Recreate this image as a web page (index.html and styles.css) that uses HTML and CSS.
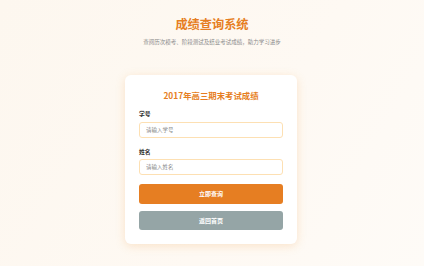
FILE: index.html
```html
<!DOCTYPE html>
<html lang="zh-CN">
<head>
    <meta charset="UTF-8">
    <meta name="viewport" content="width=device-width, initial-scale=1.0">
    <title>成绩查询系统</title>
    <link rel="stylesheet" href="styles.css">
</head>
<body>

    <div class="header">
        <h1 class="title">成绩查询系统</h1>
        <p class="subtitle">查阅历次模考、阶段测试及结业考试成绩，助力学习进步</p>
    </div>

    <div class="card">
        <h2 class="card-title">2017年高三期末考试成绩</h2>

        <label class="label" for="sid">学号</label>
        <input class="field" type="text" id="sid" placeholder="请输入学号" />

        <label class="label label-gap" for="sname">姓名</label>
        <input class="field" type="text" id="sname" placeholder="请输入姓名" />

        <button class="btn btn-main">立即查询</button>
        <button class="btn btn-back">返回首页</button>
    </div>

</body>
</html>
```

FILE: styles.css
```css
body {
    margin: 0;
    height: 266px;
    font-family: "Noto Sans CJK SC", "Noto Sans", sans-serif;
    background: linear-gradient(120deg, #fdf7ef 0%, #fef9f3 60%, #fefbf7 100%);
    overflow: hidden;
}

.header {
    text-align: center;
    padding-top: 16px;
}

.title {
    margin: 0;
    font-size: 12.2px;
    line-height: 16px;
    font-weight: bold;
    color: #e67e22;
}

.subtitle {
    margin: 6px 0 0;
    font-size: 5.5px;
    line-height: 8px;
    color: #8a8a8a;
}

.card {
    width: 144px;
    margin: 29px auto 0;
    padding: 14px;
    background: #fff;
    border-radius: 6px;
    box-shadow: 0 2px 10px rgba(240, 165, 80, 0.26);
    display: flex;
    flex-direction: column;
    transform: translateX(-1px);
}

.card-title {
    margin: 0;
    text-align: center;
    font-size: 8.4px;
    line-height: 12px;
    font-weight: bold;
    color: #e67e22;
}

.label {
    margin-top: 9px;
    font-size: 5.8px;
    line-height: 8px;
    font-weight: bold;
    color: #333;
}

.label-gap {
    margin-top: 10px;
}

.field {
    margin-top: 3.5px;
    box-sizing: border-box;
    width: 100%;
    height: 16px;
    padding: 0 6px;
    border: 1.5px solid #fde0b3;
    border-radius: 3px;
    font-family: inherit;
    font-size: 5.5px;
    color: #333;
    outline: none;
}

.field::placeholder {
    color: #888;
}

.btn {
    width: 100%;
    height: 19.5px;
    border: none;
    border-radius: 3px;
    font-family: inherit;
    font-size: 6px;
    font-weight: bold;
    color: #fff;
    cursor: pointer;
}

.btn-main {
    margin-top: 9px;
    background-color: #e67e22;
}

.btn-back {
    margin-top: 7px;
    background-color: #95a5a6;
}
```
